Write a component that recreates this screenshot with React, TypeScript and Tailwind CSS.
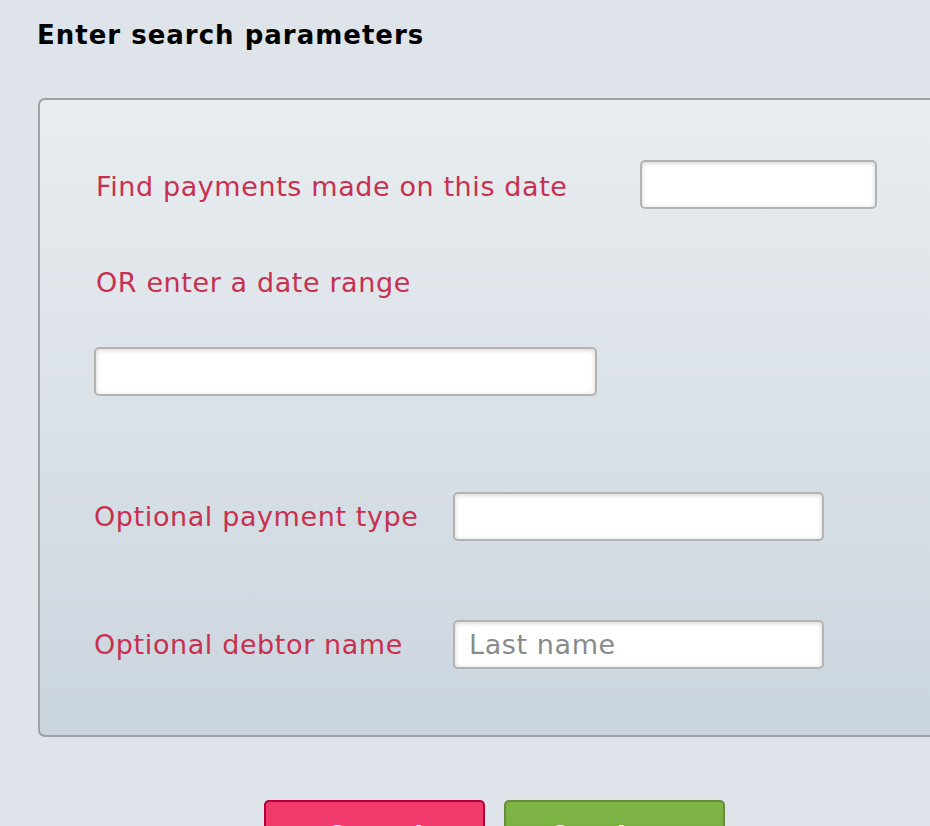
export default function App() {
  const label = "text-[27px] leading-[30px] tracking-[0.6px] text-[#c8304f]";
  const input =
    "h-[49px] rounded-[5px] border-2 border-[#b3b3b3] bg-white px-[14px] text-[27px] tracking-[0.6px] text-[#333] shadow-[inset_0_1px_5px_rgba(0,0,0,0.18)] outline-none placeholder:text-[#8a8a8a]";

  return (
    <div className="h-[826px] w-[930px] overflow-hidden bg-[#dfe3ea] font-['DejaVu_Sans',Verdana,sans-serif]">
      <div className="pl-[37px] pt-[17px] text-[26px] font-bold leading-[36px] tracking-[1px] text-black">
        Enter search parameters
      </div>

      <div className="ml-[38px] mt-[45px] w-[960px] rounded-[7px] border-2 border-[#9ca1a6] bg-gradient-to-b from-[#e9edf0] to-[#cbd5de] pb-[66px] pl-[54px] pt-[60px]">
        <div className="flex items-center">
          <div className={`${label} w-[546px] pl-[2px] pt-[4px]`}>
            Find payments made on this date
          </div>
          <input className={`${input} w-[237px]`} />
        </div>

        <div className={`${label} mt-[59px] pl-[2px]`}>OR enter a date range</div>

        <input className={`${input} mt-[49px] block w-[503px]`} />

        <div className="mt-[96px] flex items-center">
          <div className={`${label} w-[359px]`}>Optional payment type</div>
          <input className={`${input} w-[371px]`} />
        </div>

        <div className="mt-[79px] flex items-center">
          <div className={`${label} w-[359px]`}>Optional debtor name</div>
          <input className={`${input} w-[371px]`} placeholder="Last name" />
        </div>
      </div>

      <div className="ml-[264px] mt-[63px] flex gap-[19px]">
        <button className="h-[72px] w-[221px] rounded-[5px] border-2 border-[#b5003c] bg-[#f23b6d] text-[26px] font-bold text-white">
          Cancel
        </button>
        <button className="h-[72px] w-[221px] rounded-[5px] border-2 border-[#6b8a3f] bg-gradient-to-b from-[#7fb545] to-[#76ab3e] text-[26px] font-bold text-white">
          Continue
        </button>
      </div>
    </div>
  );
}
